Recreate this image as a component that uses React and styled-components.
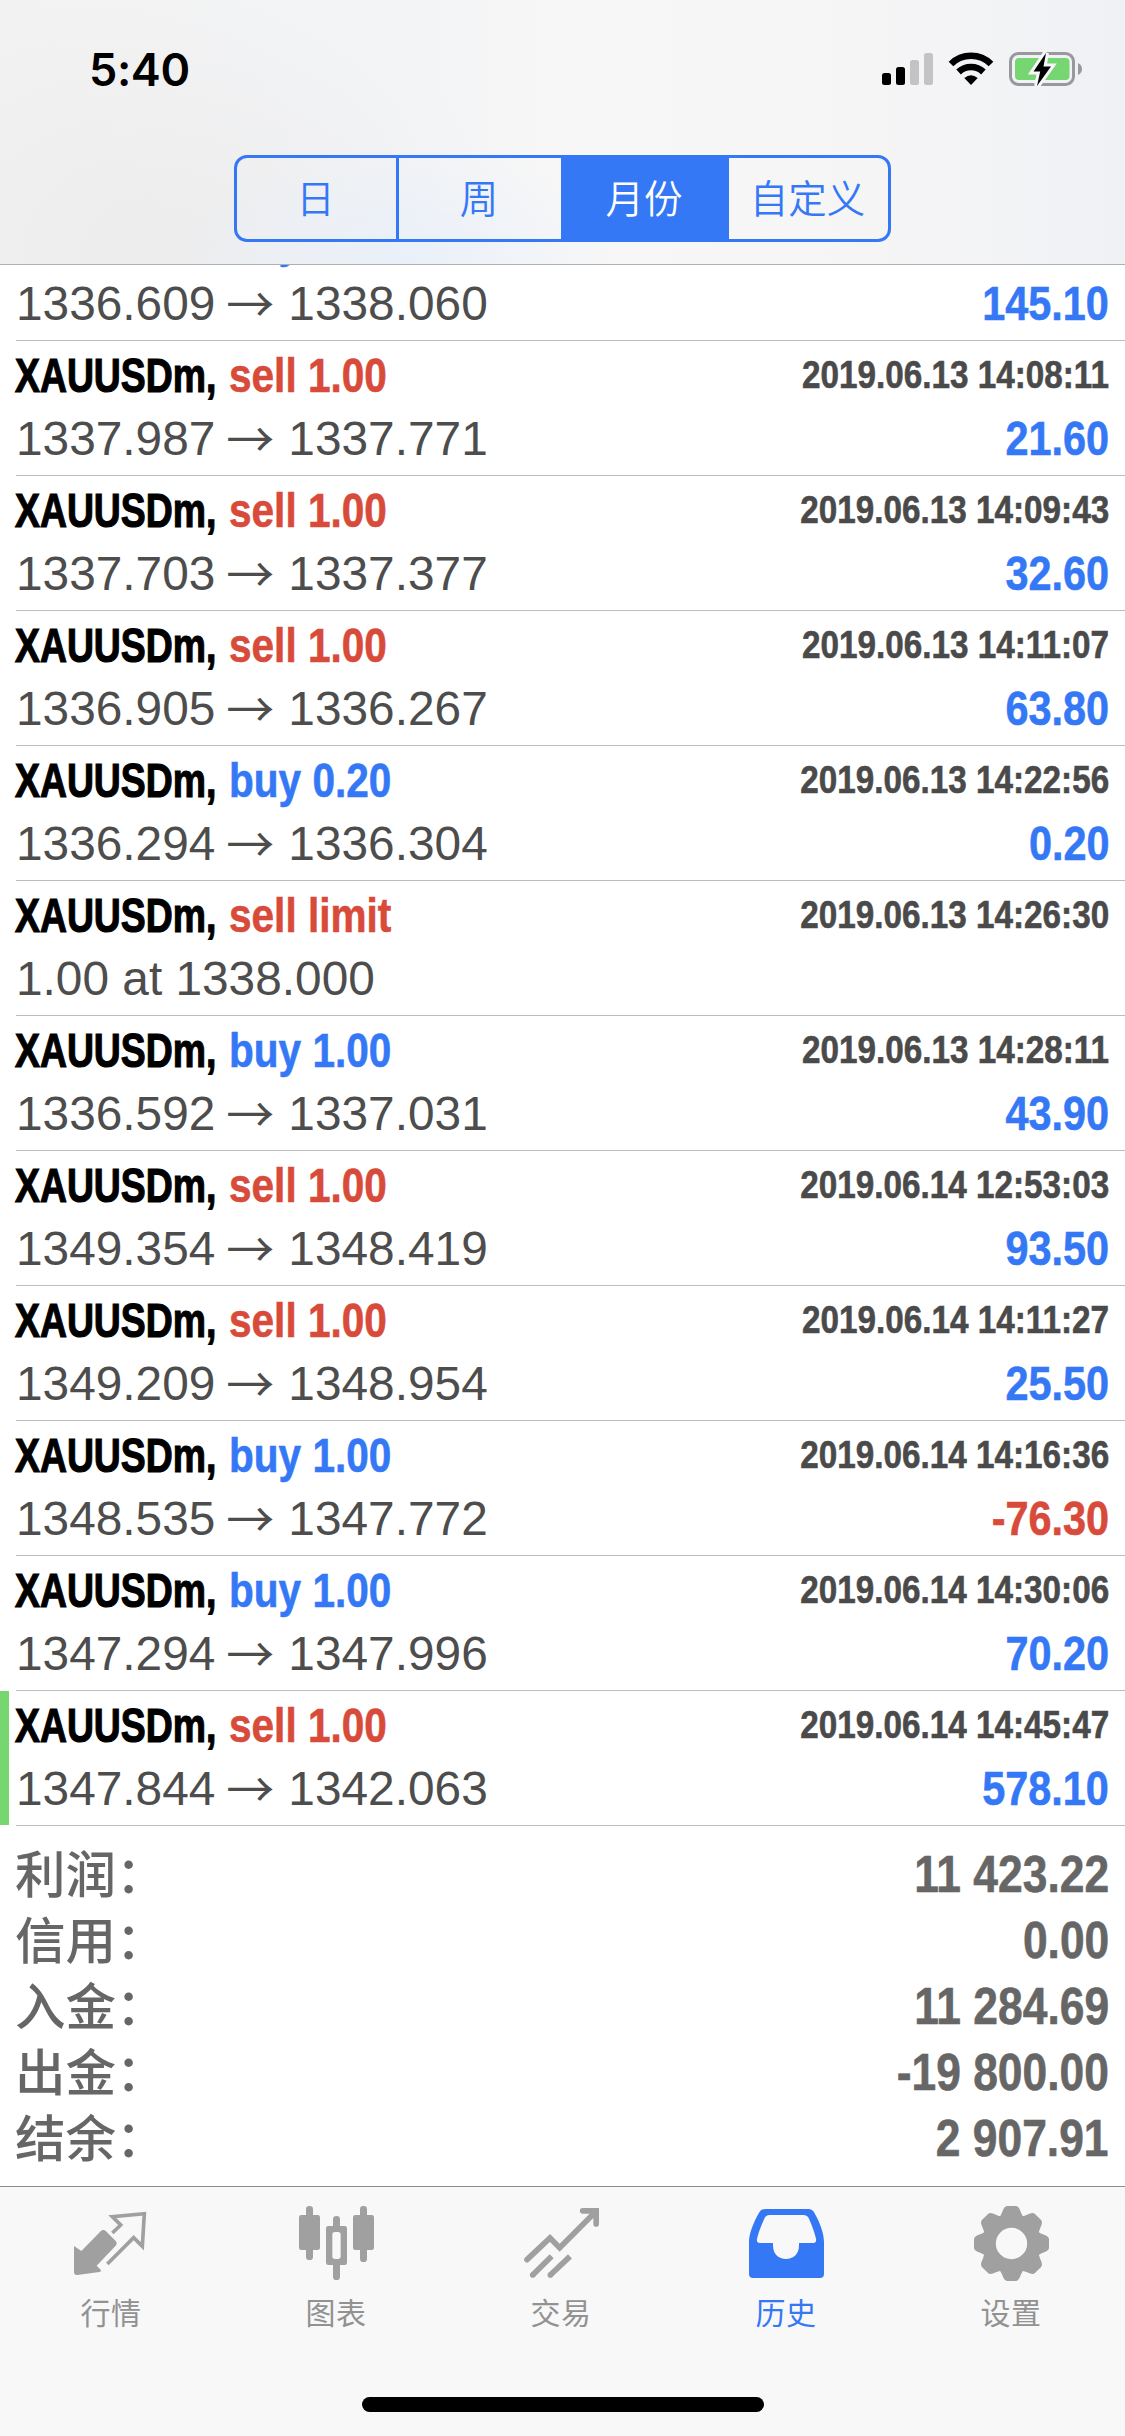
import React from 'react'
import styled, { createGlobalStyle } from 'styled-components';

const BLUE = '#3578f6';
const RED = '#d84a3a';
const GRAY = '#a0a0a0';

const GlobalStyle = createGlobalStyle`
  body {
    margin: 0;
    background: #fff;
    font-family: "Liberation Sans", "Noto Sans CJK SC", sans-serif;
  }
`;

const deals = [
  { side: 'buy 1.00', from: '1336.609', to: '1338.060', profit: '145.10' },
  { side: 'sell 1.00', time: '2019.06.13 14:08:11', from: '1337.987', to: '1337.771', profit: '21.60' },
  { side: 'sell 1.00', time: '2019.06.13 14:09:43', from: '1337.703', to: '1337.377', profit: '32.60' },
  { side: 'sell 1.00', time: '2019.06.13 14:11:07', from: '1336.905', to: '1336.267', profit: '63.80' },
  { side: 'buy 0.20', time: '2019.06.13 14:22:56', from: '1336.294', to: '1336.304', profit: '0.20' },
  { side: 'sell limit', time: '2019.06.13 14:26:30', note: '1.00 at 1338.000' },
  { side: 'buy 1.00', time: '2019.06.13 14:28:11', from: '1336.592', to: '1337.031', profit: '43.90' },
  { side: 'sell 1.00', time: '2019.06.14 12:53:03', from: '1349.354', to: '1348.419', profit: '93.50' },
  { side: 'sell 1.00', time: '2019.06.14 14:11:27', from: '1349.209', to: '1348.954', profit: '25.50' },
  { side: 'buy 1.00', time: '2019.06.14 14:16:36', from: '1348.535', to: '1347.772', profit: '-76.30' },
  { side: 'buy 1.00', time: '2019.06.14 14:30:06', from: '1347.294', to: '1347.996', profit: '70.20' },
  { side: 'sell 1.00', time: '2019.06.14 14:45:47', from: '1347.844', to: '1342.063', profit: '578.10', marked: true },
];

const totals = [
  { label: '利润：', value: '11 423.22' },
  { label: '信用：', value: '0.00' },
  { label: '入金：', value: '11 284.69' },
  { label: '出金：', value: '-19 800.00' },
  { label: '结余：', value: '2 907.91' },
];

const periods = ['日', '周', '月份', '自定义'];

const Screen = styled.div`
  display: flex;
  flex-direction: column;
  width: 1125px;
  height: 2436px;
  overflow: hidden;
  background: #fff;
`;

// Header
const Header = styled.header`
  flex: none;
  box-sizing: border-box;
  height: 265px;
  border-bottom: 1px solid #b0b0b2;
  background:
    radial-gradient(ellipse 220px 120px at 400px 264px, rgba(232, 240, 251, 0.8), transparent),
    radial-gradient(ellipse 360px 260px at 160px 250px, rgba(236, 236, 237, 0.9), transparent),
    linear-gradient(90deg, #f2f2f2 0%, #f3f4f6 35%, #f7f7f7 50%, #f6f6f6 72%, #f0f1f5 100%);
`;

const StatusBar = styled.div`
  display: flex;
  justify-content: space-between;
  align-items: center;
  height: 138px;
  padding: 0 41px 0 89px;
`;

const Clock = styled.div`
  font-family: Inter, sans-serif;
  font-size: 45px;
  font-weight: 600;
  line-height: 54px;
  letter-spacing: -0.4px;
  padding-top: 1px;
`;

const Segments = styled.div`
  display: grid;
  grid-template-columns: 159px 165px 168px 159px;
  box-sizing: border-box;
  width: 657px;
  height: 87px;
  margin: 17px auto 0;
  border: 3px solid ${BLUE};
  border-radius: 13px;
  overflow: hidden;
`;

const Segment = styled.button`
  margin: 0;
  padding: 0 2px 4px 0;
  border: none;
  border-left: ${({ $divided }) => ($divided ? `3px solid ${BLUE}` : 'none')};
  background: ${({ $active }) => ($active ? BLUE : 'transparent')};
  color: ${({ $active }) => ($active ? '#fff' : BLUE)};
  font: 350 38.5px/77px "Noto Sans CJK SC", sans-serif;
`;

// Deals list, scrolled so that the first row is half under the header
const List = styled.div`
  flex: none;
  overflow: hidden;
`;

const Row = styled.div`
  display: flex;
  box-sizing: border-box;
  height: 135px;
  background: linear-gradient(${({ $marked }) => ($marked ? '#76d66f, #76d66f' : '#fff, #fff')}) 0 0 / 9px 134px no-repeat;

  &:first-child {
    margin-top: -59px;
  }
`;

const RowBody = styled.div`
  flex: 1;
  box-sizing: border-box;
  margin-left: 16px;
  padding-right: 16px;
  border-bottom: 1px solid #bcbcbe;
`;

const Line = styled.div`
  display: flex;
  justify-content: space-between;
  height: ${({ $h }) => $h}px;
  line-height: ${({ $h }) => $h}px;
`;

const Title = styled.div`
  display: grid;
  grid-template-columns: 213px auto;
  font-size: 48px;
  font-weight: 700;
  line-height: 70px;
  white-space: nowrap;
`;

// Condensed bold face: squeezed horizontally from one side
const Condensed = styled.span`
  display: block;
  transform: scaleX(${({ $x = 0.862 }) => $x});
  transform-origin: ${({ $from = 'left' }) => $from} center;
  -webkit-text-stroke: 0.6px currentColor;
  white-space: nowrap;
`;

const Ticker = styled(Condensed)`
  margin-left: -1px;
  -webkit-text-stroke-width: 1.2px;
`;

const Side = styled(Condensed)`
  color: ${({ $buy }) => ($buy ? BLUE : RED)};
`;

const Time = styled(Condensed)`
  font-size: 39px;
  font-weight: 700;
  line-height: 68px;
  color: #4a4a4a;
`;

const Prices = styled.div`
  display: flex;
  gap: 12px;
  font-size: 47.8px;
  color: #4d4d4d;
`;

const Arrow = styled.span`
  width: 49px;
  font-family: "Noto Sans CJK SC", sans-serif;
  font-size: 48px;
  font-weight: 400;
  line-height: 54px;
  text-indent: -1px;
`;

const Profit = styled(Condensed)`
  font-size: 48px;
  font-weight: 700;
  color: ${({ $loss }) => ($loss ? RED : BLUE)};
`;

// Account totals
const Totals = styled.div`
  flex: 1;
  padding: 14px 16px 0;
`;

const TotalRow = styled.div`
  display: flex;
  justify-content: space-between;
  height: 66px;
  font-size: 51px;
  line-height: 70px;
  font-weight: 700;
  color: #666;
`;

const TotalLabel = styled.div`
  margin-left: -1px;
  font-family: "Noto Sans CJK SC", sans-serif;
  font-size: 50.5px;
  font-weight: 500;
  line-height: 63px;
`;

// Bottom tabs
const TabBar = styled.nav`
  display: flex;
  flex-direction: column;
  flex: none;
  align-items: center;
  box-sizing: border-box;
  height: 250px;
  border-top: 1px solid #8c8c8e;
  background: #f8f8f8;
`;

const Tabs = styled.div`
  display: grid;
  grid-template-columns: repeat(5, 225px);
  height: 210px;
`;

const Tab = styled.div`
  display: flex;
  flex-direction: column;
  align-items: center;
  padding: 19px 3px 0 0;
  color: ${({ $active }) => ($active ? BLUE : '#929292')};
  font: 400 30px/44px "Noto Sans CJK SC", sans-serif;

  svg {
    display: block;
    margin-bottom: 8px;
    color: ${({ $active }) => ($active ? BLUE : GRAY)};
  }
`;

const TabLabel = styled.span`
  letter-spacing: 0.6px;
`;

const HomeIndicator = styled.div`
  width: 402px;
  height: 15px;
  border-radius: 8px;
  background: #000;
`;

const StatusIcons = () => (
  <svg width="202" height="36" viewBox="882 51 202 36">
    <rect x="882" y="73" width="9" height="12" rx="2.5" />
    <rect x="896" y="67" width="9" height="18" rx="2.5" />
    <rect x="910" y="60" width="9" height="25" rx="2.5" fill="#c3c3c5" />
    <rect x="924" y="53" width="9" height="32" rx="2.5" fill="#c3c3c5" />
    <g fill="none" stroke="#000" strokeWidth="6.6">
      <path d="M951 64 A28.5 28.5 0 0 1 991 64" />
      <path d="M958.6 72 A18 18 0 0 1 983.4 72" />
    </g>
    <path d="M964.3 78 Q971 72.5 977.7 78 L971 85 Z" />
    <rect x="1010.5" y="53.5" width="63" height="31" rx="8" fill="none" stroke="#98989d" strokeWidth="3" />
    <path d="M1078 63 Q1082 65 1082 69 Q1082 73 1078 75 Z" fill="#98989d" />
    <rect x="1015" y="58" width="54.5" height="22" rx="4" fill="#76d672" />
    <path d="M1046 53 L1043.5 66.5 H1051 L1037 86 L1040.2 71.5 H1033.5 Z" stroke="#f7f7f9" strokeWidth="6" />
    <path d="M1046 53 L1043.5 66.5 H1051 L1037 86 L1040.2 71.5 H1033.5 Z" />
  </svg>
);

const TabIcon = ({ children }) => (
  <svg width="75" height="75" viewBox="0 0 225 225" fill="currentColor">{children}</svg>
);

const QuotesIcon = () => (
  <TabIcon>
    <path d="M0 120 L22 135 L80 76 Q88 68 96 76 L126 106 Q131 113 125 119 L68 179 L80 191 Q83 196 76 198 L10 207 Q0 208 0 198 Z" />
    <path d="M115 81 L140 57 L115 32 L211 23 L205 121 L179 95 L100 174" fill="none" stroke="currentColor" strokeWidth="11" />
  </TabIcon>
);

const ChartsIcon = () => (
  <TabIcon>
    <rect x="0" y="27" width="63" height="105" rx="7" />
    <rect x="21" y="0" width="21" height="162" rx="10" />
    <path fillRule="evenodd" d="M88 60 H137 Q144 60 144 67 V170 Q144 177 137 177 H88 Q81 177 81 170 V67 Q81 60 88 60 Z M108 78 Q100 78 100 86 V151 Q100 159 108 159 H117 Q125 159 125 151 V86 Q125 78 117 78 Z" />
    <path d="M102 62 V40 Q102 30 112.5 30 Q123 30 123 40 V62 Z M102 175 V212 Q102 222 112.5 222 Q123 222 123 212 V175 Z" />
    <rect x="162" y="27" width="63" height="105" rx="7" />
    <rect x="183" y="0" width="21" height="168" rx="10" />
  </TabIcon>
);

const TradeIcon = () => (
  <TabIcon>
    <g fill="none" stroke="currentColor" strokeWidth="17">
      <path d="M9 161 L78 96 L107 125 L214 18" strokeLinecap="round" />
      <path d="M176 14.5 H216.5 V54" strokeLinecap="round" />
      <path d="M26 207 L83 151 M79 207 L138 151" />
    </g>
    <circle cx="26" cy="207" r="8.5" />
    <circle cx="79" cy="207" r="8.5" />
  </TabIcon>
);

const HistoryIcon = () => (
  <TabIcon>
    <path
      fillRule="evenodd"
      d="M48 9 H178 Q190 9 196 20 C214 52 225 82 225 108 V204 Q225 216 213 216 H12 Q0 216 0 204 V108 C0 82 13 50 30 20 Q36 9 48 9 Z
         M62 27 Q50 27 46 38 Q30 72 24 98 Q22 111 32 111 H72 V118 C72 145 89 159 111 159 C133 159 150 145 150 118 V111 H193 Q203 111 201 98 Q195 72 180 38 Q175 27 163 27 Z"
    />
  </TabIcon>
);

const SettingsIcon = () => (
  <TabIcon>
    <g transform="translate(112.5 112.5)">
      <circle r="68" fill="none" stroke="currentColor" strokeWidth="42" />
      {[0, 45, 90, 135, 180, 225, 270, 315].map((angle) => (
        <path
          key={angle}
          transform={`rotate(${angle})`}
          d="M-40 -76 Q-32 -82 -28 -94 Q-22 -112.5 -13 -112.5 H13 Q22 -112.5 28 -94 Q32 -82 40 -76 Z"
        />
      ))}
    </g>
  </TabIcon>
);

const tabs = [
  { name: '行情', Icon: QuotesIcon },
  { name: '图表', Icon: ChartsIcon },
  { name: '交易', Icon: TradeIcon },
  { name: '历史', Icon: HistoryIcon },
  { name: '设置', Icon: SettingsIcon },
];

const Deal = ({ deal }) => (
  <Row $marked={deal.marked}>
    <RowBody>
      <Line $h={68}>
        <Title>
          <Ticker $x={0.778}>XAUUSDm,</Ticker>
          <Side $x={0.845} $buy={deal.side.startsWith('buy')}>{deal.side}</Side>
        </Title>
        {deal.time && <Time $x={0.853} $from="right">{deal.time}</Time>}
      </Line>
      <Line $h={59}>
        {deal.note ? (
          <Prices>{deal.note}</Prices>
        ) : (
          <Prices>
            <span>{deal.from}</span>
            <Arrow>→</Arrow>
            <span>{deal.to}</span>
          </Prices>
        )}
        {deal.profit && (
          <Profit $from="right" $loss={deal.profit.startsWith('-')}>{deal.profit}</Profit>
        )}
      </Line>
    </RowBody>
  </Row>
);

const App = () => {
  return (
    <Screen>
      <GlobalStyle />

      <Header>
        <StatusBar>
          <Clock>5:40</Clock>
          <StatusIcons />
        </StatusBar>
        <Segments>
          {periods.map((period, index) => (
            <Segment key={period} $active={index === 2} $divided={index === 1}>{period}</Segment>
          ))}
        </Segments>
      </Header>

      <List>
        {deals.map((deal, index) => (
          <Deal key={index} deal={deal} />
        ))}
      </List>

      <Totals>
        {totals.map((total) => (
          <TotalRow key={total.label}>
            <TotalLabel>{total.label}</TotalLabel>
            <Condensed $x={0.87} $from="right">{total.value}</Condensed>
          </TotalRow>
        ))}
      </Totals>

      <TabBar>
        <Tabs>
          {tabs.map(({ name, Icon }) => (
            <Tab key={name} $active={name === '历史'}>
              <Icon />
              <TabLabel>{name}</TabLabel>
            </Tab>
          ))}
        </Tabs>
        <HomeIndicator />
      </TabBar>
    </Screen>
  )
}

export default App
